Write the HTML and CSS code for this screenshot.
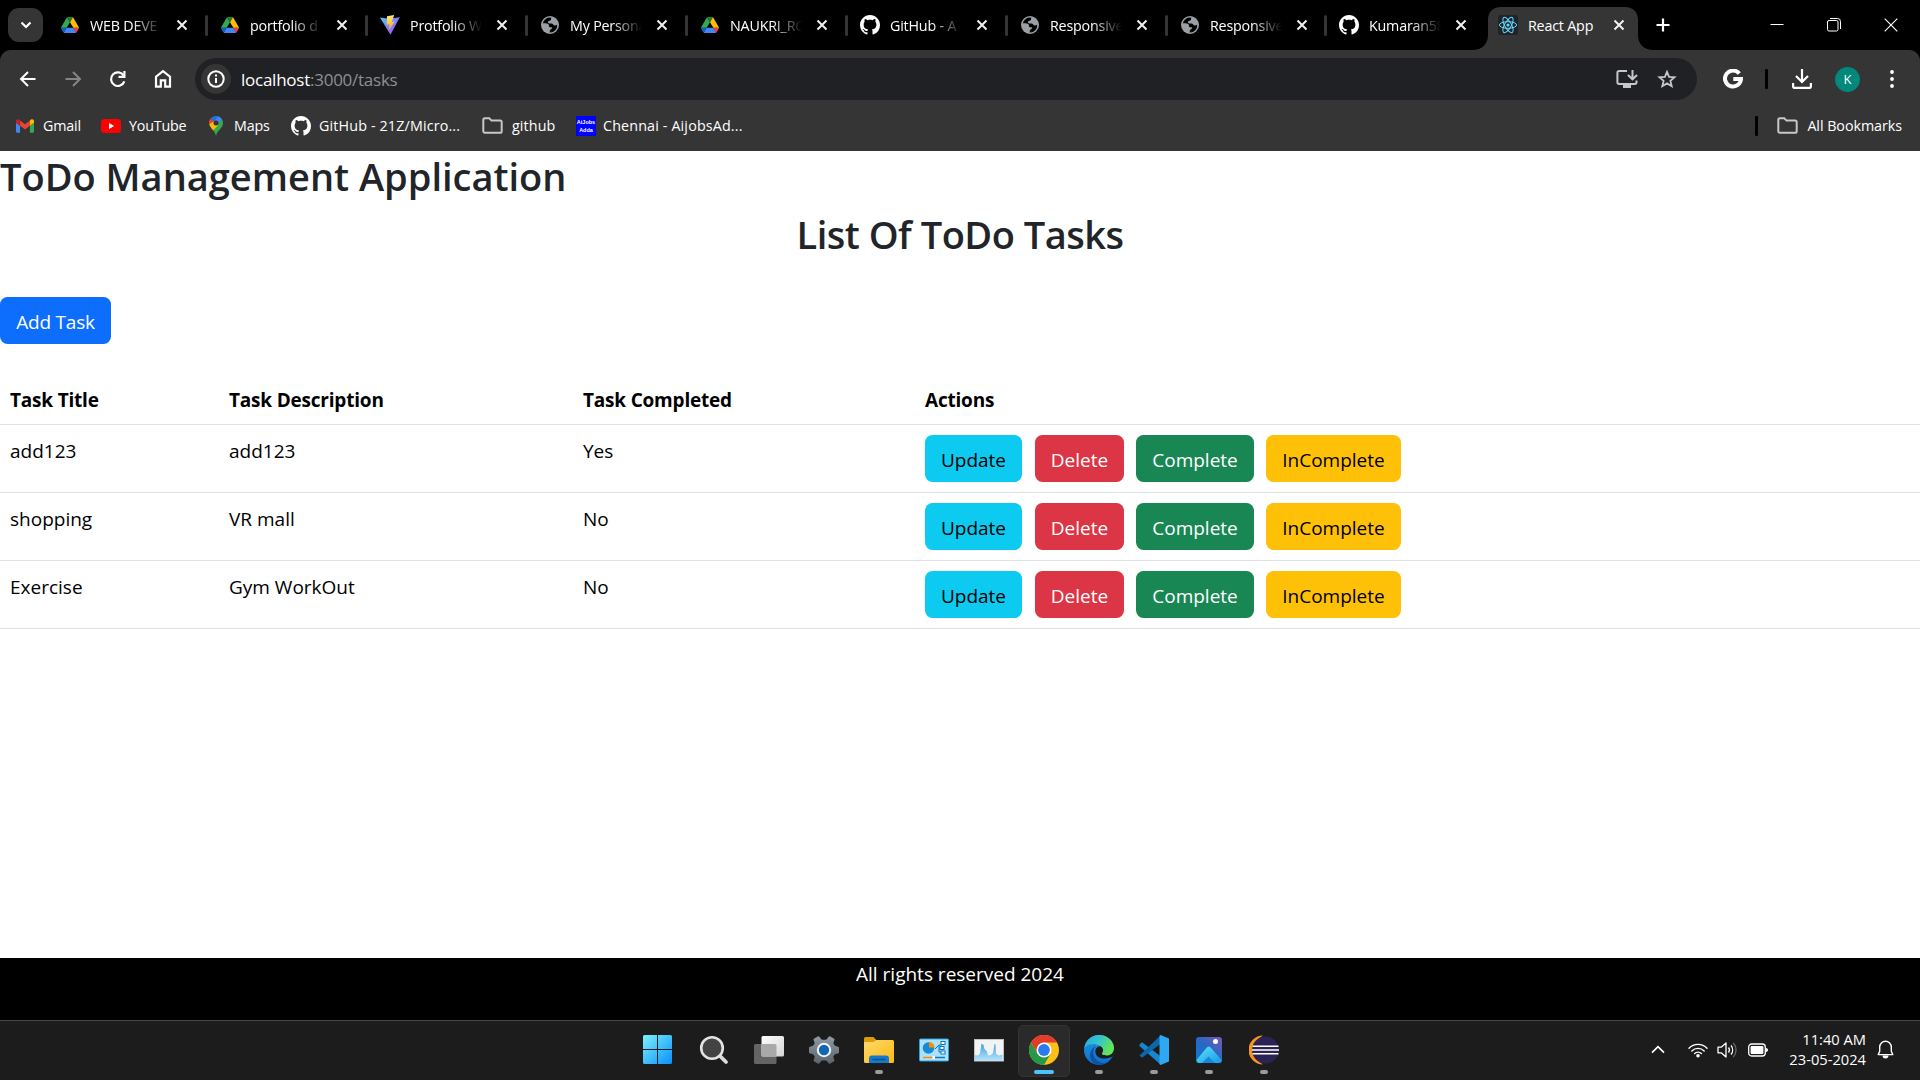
FILE: index.html
```html
<!DOCTYPE html>
<html lang="en">
<head>
<meta charset="utf-8">
<title>React App</title>
<link rel="stylesheet" href="styles.css">
</head>
<body>
<svg class="defs" aria-hidden="true">
  <defs>
    <linearGradient id="vite-a" x1="0" y1="0" x2="1" y2="1"><stop offset="0" stop-color="#41d1ff"/><stop offset="1" stop-color="#bd34fe"/></linearGradient>
    <linearGradient id="vite-b" x1="0" y1="0" x2="0" y2="1"><stop offset="0" stop-color="#ffea83"/><stop offset="1" stop-color="#ffa800"/></linearGradient>
    <linearGradient id="win" gradientUnits="userSpaceOnUse" x1="0" y1="0" x2="29" y2="29"><stop offset="0" stop-color="#7df0fb"/><stop offset="1" stop-color="#0a90fb"/></linearGradient>
    <linearGradient id="view" x1="0" y1="0" x2="1" y2="1"><stop offset="0" stop-color="#fff"/><stop offset="1" stop-color="#d4d4d4"/></linearGradient>
    <linearGradient id="gear" x1="0" y1="0" x2="0" y2="1"><stop offset="0" stop-color="#8f989f"/><stop offset="1" stop-color="#5c6670"/></linearGradient>
    <linearGradient id="folder" x1="0" y1="0" x2="1" y2="1"><stop offset="0" stop-color="#ffda6a"/><stop offset="1" stop-color="#fdb813"/></linearGradient>
    <linearGradient id="perf" x1="0" y1="0" x2="0" y2="1"><stop offset="0" stop-color="#3f9fe0"/><stop offset="1" stop-color="#b5e3fb"/></linearGradient>
    <linearGradient id="edge-a" x1="0" y1="0" x2="1" y2=".4"><stop offset="0" stop-color="#2ba5e0"/><stop offset=".5" stop-color="#34c3cf"/><stop offset="1" stop-color="#62e657"/></linearGradient>
    <linearGradient id="edge-b" x1="0" y1="0" x2="0" y2="1"><stop offset="0" stop-color="#2099dd"/><stop offset="1" stop-color="#0b6fd0"/></linearGradient>
    <linearGradient id="photo" x1="0" y1="1" x2="1" y2="0"><stop offset="0" stop-color="#0e78d4"/><stop offset=".5" stop-color="#2668c4"/><stop offset="1" stop-color="#7b57b8"/></linearGradient>
    <linearGradient id="hill" x1="0" y1="0" x2="1" y2="1"><stop offset="0" stop-color="#5fe3fb"/><stop offset="1" stop-color="#139ae6"/></linearGradient>
    <symbol id="drive" viewBox="0 0 87.3 78">
      <path fill="#0066da" d="m6.6 66.85 3.85 6.65c.8 1.4 1.95 2.5 3.3 3.3l13.75-23.8h-27.5c0 1.55.4 3.1 1.2 4.5z"/>
      <path fill="#34a853" d="m43.65 25-13.75-23.8c-1.35.8-2.5 1.9-3.3 3.3l-25.4 44a9.06 9.06 0 0 0-1.2 4.5h27.5z"/>
      <path fill="#ea4335" d="m73.55 76.8c1.35-.8 2.5-1.9 3.3-3.3l1.6-2.75 7.65-13.25c.8-1.4 1.2-2.95 1.2-4.5h-27.5l5.85 11.5z"/>
      <path fill="#188038" d="m43.65 25 13.75-23.8c-1.35-.8-2.9-1.2-4.5-1.2h-18.5c-1.6 0-3.15.45-4.5 1.2z"/>
      <path fill="#4285f4" d="m59.8 53h-32.3l-13.75 23.8c1.35.8 2.9 1.2 4.5 1.2h50.8c1.6 0 3.15-.45 4.5-1.2z"/>
      <path fill="#fbbc04" d="m73.4 26.5-12.7-22c-.8-1.4-1.95-2.5-3.3-3.3l-13.75 23.8 16.15 28h27.45c0-1.55-.4-3.1-1.2-4.5z"/>
    </symbol>
    <symbol id="github" viewBox="0 0 16 16"><path fill="#fff" d="M8 0C3.58 0 0 3.58 0 8c0 3.54 2.29 6.53 5.47 7.59.4.07.55-.17.55-.38 0-.19-.01-.82-.01-1.49-2.01.37-2.53-.49-2.69-.94-.09-.23-.48-.94-.82-1.13-.28-.15-.68-.52-.01-.53.63-.01 1.08.58 1.23.82.72 1.21 1.87.87 2.33.66.07-.52.28-.87.51-1.07-1.78-.2-3.64-.89-3.64-3.95 0-.87.31-1.59.82-2.15-.08-.2-.36-1.02.08-2.12 0 0 .67-.21 2.2.82.64-.18 1.32-.27 2-.27s1.36.09 2 .27c1.53-1.04 2.2-.82 2.2-.82.44 1.1.16 1.92.08 2.12.51.56.82 1.27.82 2.15 0 3.07-1.87 3.75-3.65 3.95.29.25.54.73.54 1.48 0 1.07-.01 1.93-.01 2.2 0 .21.15.46.55.38A8.01 8.01 0 0 0 16 8c0-4.42-3.58-8-8-8z"/></symbol>
    <symbol id="globe" viewBox="0 0 18 18">
      <circle cx="9" cy="9" r="9" fill="#9aa0a6"/>
      <path fill="#000" d="M10.3 1.7A7.4 7.4 0 0 0 1.8 7.3h2.8c2.2 0 3.4 1 3.4 2.6 0 1 .8 1.5 2.2 1.3 1.2-.2 1.4.6.6 1.4l-2 1.6v2.2A7.3 7.3 0 0 0 16.3 8.6c-1 .8-2.200 1.200-3.300.6-1-.5-1.100-1.600-2.300-1.700L8.200 7.400c-1.500 0-1.800-1.800-.6-2.400 1.100-.4 2.100-.3 2.400-1.400z"/>
    </symbol>
    <symbol id="close" viewBox="0 0 12 12"><path d="M1.500 1.500l9 9M10.500 1.500l-9 9" stroke="#f1f1f1" stroke-width="2"/></symbol>
    <symbol id="folder-line" viewBox="0 0 21 17"><path d="M1.300 14V3c0-1 .6-1.700 1.600-1.700h4.400l2.200 2.300h8.600c1 0 1.600.7 1.600 1.700v8.900c0 1-.6 1.600-1.600 1.600H2.900c-1 0-1.600-.7-1.600-1.800z" fill="none" stroke="#c7c7c7" stroke-width="2"/></symbol>
  </defs>
</svg>

<header class="browser">
  <div class="tabstrip">
    <button class="tab-search"><svg width="12" height="8" viewBox="0 0 12 8"><path d="M1.500 1.500L6 6l4.500-4.500" fill="none" stroke="#fff" stroke-width="2.200"/></svg></button>
    <div class="tabs">
      <div class="tab"><svg class="fav" viewBox="-1 -2 20 20"><use href="#drive" width="18" height="16"/></svg><span class="tab-title">WEB DEVE</span><svg class="x"><use href="#close"/></svg></div>
      <div class="tab"><svg class="fav" viewBox="-1 -2 20 20"><use href="#drive" width="18" height="16"/></svg><span class="tab-title">portfolio d</span><svg class="x"><use href="#close"/></svg></div>
      <div class="tab"><svg class="fav" viewBox="0 0 20 20"><path fill="url(#vite-a)" d="M0 2.500l8.500 1.300L19.800 2.200 10.500 19.800z"/><path fill="url(#vite-b)" d="M14.200 0L7 1.300 6.600 9.700l2.900-.5-.7 6 6-8.700-3 .5z"/></svg><span class="tab-title">Protfolio W</span><svg class="x"><use href="#close"/></svg></div>
      <div class="tab"><svg class="fav" viewBox="-1 -1 20 20"><use href="#globe" width="18" height="18"/></svg><span class="tab-title">My Persona</span><svg class="x"><use href="#close"/></svg></div>
      <div class="tab"><svg class="fav" viewBox="-1 -2 20 20"><use href="#drive" width="18" height="16"/></svg><span class="tab-title">NAUKRI_RO</span><svg class="x"><use href="#close"/></svg></div>
      <div class="tab"><svg class="fav"><use href="#github"/></svg><span class="tab-title">GitHub - A</span><svg class="x"><use href="#close"/></svg></div>
      <div class="tab"><svg class="fav" viewBox="-1 -1 20 20"><use href="#globe" width="18" height="18"/></svg><span class="tab-title">Responsive</span><svg class="x"><use href="#close"/></svg></div>
      <div class="tab narrow"><svg class="fav" viewBox="-1 -1 20 20"><use href="#globe" width="18" height="18"/></svg><span class="tab-title">Responsive</span><svg class="x"><use href="#close"/></svg></div>
      <div class="tab narrow last"><svg class="fav"><use href="#github"/></svg><span class="tab-title">Kumaran58</span><svg class="x"><use href="#close"/></svg></div>
      <div class="tab active"><svg class="tab-shape" width="182" height="43" viewBox="0 0 182 43"><path fill="#353535" d="M0 43c10 0 16-6 16-15V13C16 5 21 0 29 0h124c8 0 13 5 13 13v15c0 9 6 15 16 15z"/></svg><svg class="fav" viewBox="0 0 20 20"><rect width="20" height="20" rx="2" fill="#20232a"/><g fill="none" stroke="#61dafb" stroke-width="1"><ellipse cx="10" cy="10" rx="8.600" ry="3.300"/><ellipse cx="10" cy="10" rx="8.600" ry="3.300" transform="rotate(60 10 10)"/><ellipse cx="10" cy="10" rx="8.600" ry="3.300" transform="rotate(120 10 10)"/></g><circle cx="10" cy="10" r="1.600" fill="#61dafb"/></svg><span class="tab-title full">React App</span><svg class="x"><use href="#close"/></svg></div>
    </div>
    <svg class="new-tab" width="14" height="14" viewBox="0 0 14 14"><path d="M7 .5v13M.5 7h13" stroke="#fff" stroke-width="2.200"/></svg>
    <div class="window-controls">
      <svg width="14" height="14"><path d="M.5 6.500h13" stroke="#fff"/></svg>
      <svg width="14" height="14"><rect x=".5" y="2.500" width="10.500" height="10.500" rx="1.500" fill="none" stroke="#fff"/><path d="M3 .5h7.500a3 3 0 0 1 3 3V11" fill="none" stroke="#fff"/></svg>
      <svg width="14" height="14"><path d="M.7.7l12.600 12.600M13.300.7L.7 13.300" stroke="#fff" stroke-width="1.100"/></svg>
    </div>
  </div>

  <div class="toolbar">
    <div class="nav">
      <svg viewBox="0 0 20 20"><path d="M17.500 10H3.500M10 3l-7 7 7 7" fill="none" stroke="#fff" stroke-width="2"/></svg>
      <svg viewBox="0 0 20 20"><path d="M2.500 10h14M10 3l7 7-7 7" fill="none" stroke="#858585" stroke-width="2"/></svg>
      <svg viewBox="0 0 20 20"><path d="M16.300 12.300a6.800 6.800 0 1 1-.6-5.600" fill="none" stroke="#fff" stroke-width="2.200"/><path d="M17.500 2v7h-7V6.800h4.800V2z" fill="#fff"/></svg>
      <svg viewBox="0 0 20 20"><path d="M3 17.600V7.700l7-5.500 7 5.500v9.900h-4.800v-6.200H7.800v6.200z" fill="none" stroke="#fff" stroke-width="2.200"/></svg>
    </div>
    <div class="omnibox">
      <span class="site-info"><svg width="18" height="18" viewBox="0 0 18 18"><circle cx="9" cy="9" r="7.700" fill="none" stroke="#fff" stroke-width="2"/><path d="M9 8v5M9 4.600v2" stroke="#fff" stroke-width="2"/></svg></span>
      <span class="url">localhost<span class="dim">:3000/tasks</span></span>
      <svg class="install" width="22" height="20" viewBox="0 0 22 20"><path d="M11 2H3.200C2 2 1.400 2.600 1.400 3.700v9.600c0 1.100.6 1.700 1.800 1.700h15.600c1.100 0 1.700-.6 1.700-1.700v-1.800" fill="none" stroke="#c7c7c7" stroke-width="2"/><path d="M7 15.500h8v3.500H7z" fill="#c7c7c7"/><path d="M16.500 1v8.500M12 6l4.500 4.300L21 6" fill="none" stroke="#c7c7c7" stroke-width="2"/></svg>
      <svg width="20" height="20" viewBox="0 0 20 20"><path d="M10 2.800l2.100 5 5.500.5-4.200 3.600 1.300 5.300L10 14.400l-4.700 2.800 1.300-5.300-4.200-3.600 5.500-.5z" fill="none" stroke="#c7c7c7" stroke-width="1.800"/></svg>
    </div>
    <div class="actions">
      <svg class="g" width="20" height="20" viewBox="0 0 20 20"><path d="M16.300 4.600A8 8 0 1 0 18 10H10.300" fill="none" stroke="#fff" stroke-width="4"/></svg>
      <span class="divider"></span>
      <svg class="dl" width="20" height="20" viewBox="0 0 20 20"><path d="M10 0v12M4 7l6 6 6-6M1.100 14v3.200c0 1 .6 1.700 1.700 1.700h14.400c1.100 0 1.700-.7 1.700-1.700V14" fill="none" stroke="#fff" stroke-width="2.200"/></svg>
      <span class="avatar">K</span>
      <svg class="dots" width="4" height="18" viewBox="0 0 4 18"><g fill="#fff"><circle cx="2" cy="2" r="1.900"/><circle cx="2" cy="9" r="1.900"/><circle cx="2" cy="16" r="1.900"/></g></svg>
    </div>
  </div>

  <nav class="bookmarks">
    <a class="bm gmail"><svg width="18" height="14" viewBox="52 42 88 66"><path fill="#4285f4" d="M58 108h14V74L52 59v43c0 3.320 2.690 6 6 6"/><path fill="#34a853" d="M120 108h14c3.320 0 6-2.690 6-6V59l-20 15"/><path fill="#fbbc04" d="M120 48v26l20-15v-8c0-7.420-8.470-11.650-14.400-7.200"/><path fill="#ea4335" d="M72 74V48l24 18 24-18v26L96 92"/><path fill="#c5221f" d="M52 51v8l20 15V48l-5.600-4.200c-5.940-4.450-14.400-.22-14.400 7.200"/></svg><span>Gmail</span></a>
    <a class="bm youtube"><svg width="20" height="14" viewBox="0 0 20 14"><rect width="20" height="14" rx="3.500" fill="#f00"/><path d="M8 4l5.200 3L8 10z" fill="#fff"/></svg><span>YouTube</span></a>
    <a class="bm maps"><svg width="14" height="20" viewBox="0 0 14 20"><path fill="#34a853" d="M14 7c0 5.500-5.600 6.500-7 13-.6-2.500-1.600-4.100-2.700-5.500L12.600 2.800C13.500 4 14 5.400 14 7z"/><path fill="#fbbc04" d="M9.400 9L4.300 14.600C2.500 12.300.8 10.400.1 7.700L4.500 5z"/><path fill="#ea4335" d="M1.700 2.500L5 5.200.2 8.200C-.3 5.900.2 4.100 1.700 2.500z"/><path fill="#1a73e8" d="M1.700 2.500C4-.2 7.200-.4 9 .3L5 5.300z"/><path fill="#4285f4" d="M9 .3c1.700.5 3 1.500 3.800 2.900L8.900 8.400 4.800 5.300z"/><circle cx="7" cy="7" r="2.500" fill="#353535"/></svg><span>Maps</span></a>
    <a class="bm repo"><svg width="20" height="20"><use href="#github"/></svg><span>GitHub - 21Z/Micro...</span></a>
    <a class="bm gh-folder"><svg width="21" height="17"><use href="#folder-line"/></svg><span>github</span></a>
    <a class="bm jobs"><span class="jobs-icon">AiJobs<br>Adda</span><span>Chennai - AijobsAd...</span></a>
    <span class="divider push"></span>
    <a class="bm all"><svg width="21" height="17"><use href="#folder-line"/></svg><span>All Bookmarks</span></a>
  </nav>
</header>

<main class="page">
  <h2 class="heading app-title">ToDo Management Application</h2>
  <h2 class="heading list-title">List Of ToDo Tasks</h2>
  <button class="btn primary">Add Task</button>
  <table class="tasks">
    <colgroup><col class="c1"><col class="c2"><col class="c3"><col></colgroup>
    <thead><tr><th>Task Title</th><th>Task Description</th><th>Task Completed</th><th>Actions</th></tr></thead>
    <tbody>
      <tr><td>add123</td><td>add123</td><td>Yes</td><td><div class="row-actions"><button class="btn info">Update</button><button class="btn danger">Delete</button><button class="btn success">Complete</button><button class="btn warning">InComplete</button></div></td></tr>
      <tr><td>shopping</td><td>VR mall</td><td>No</td><td><div class="row-actions"><button class="btn info">Update</button><button class="btn danger">Delete</button><button class="btn success">Complete</button><button class="btn warning">InComplete</button></div></td></tr>
      <tr><td>Exercise</td><td>Gym WorkOut</td><td>No</td><td><div class="row-actions"><button class="btn info">Update</button><button class="btn danger">Delete</button><button class="btn success">Complete</button><button class="btn warning">InComplete</button></div></td></tr>
    </tbody>
  </table>
  <footer class="footer">All rights reserved 2024</footer>
</main>

<div class="taskbar">
  <div class="apps">
    <div class="app start"><svg width="29" height="29" viewBox="0 0 29 29"><path fill="url(#win)" d="M1.500 0H14v14H0V1.500A1.500 1.500 0 0 1 1.500 0zM15 0h12.500A1.500 1.500 0 0 1 29 1.500V14H15zM0 15h14v14H1.500A1.500 1.500 0 0 1 0 27.500zM15 15h14v12.500a1.500 1.500 0 0 1-1.500 1.500H15z"/></svg></div>
    <div class="app"><svg width="30" height="30" viewBox="0 0 30 30"><path d="M19 19l8 8" stroke="#d8dce0" stroke-width="3.800" stroke-linecap="round"/><circle cx="13" cy="13" r="10.800" fill="#434343" stroke="#e3e3e3" stroke-width="2.600"/></svg></div>
    <div class="app"><svg width="30" height="30" viewBox="0 0 30 30"><rect y="9" width="22.500" height="20" rx="1.500" fill="#646464"/><rect x="7.500" y="1" width="22.500" height="20.500" rx="1.500" fill="url(#view)"/><path d="M7.500 9H21a1.500 1.500 0 0 1 1.500 1.500v11H9A1.500 1.500 0 0 1 7.500 20z" fill="#a9a9a9"/></svg></div>
    <div class="app"><svg width="30" height="30" viewBox="0 0 30 30"><path fill="url(#gear)" stroke="url(#gear)" stroke-width="1.500" stroke-linejoin="round" transform="translate(15 15)" d="M-2.500-9.500L-5.500-13-9.800-10.500-8.500-6.700-10.400-3.700-14.300-2.300V2.500l4.100 1.200 1.700 3-1.200 4L-5.500 13l3-3.300h5L5.500 13l4.200-2.300-1.200-4 1.700-3 4.100-1.200v-4.800l-3.900-1.400-1.900-3 1.300-3.800L5.500-13l-3 3.500z"/><circle cx="15" cy="15" r="6.200" fill="#1266b5" stroke="#f4f4f4" stroke-width="2"/></svg></div>
    <div class="app open"><svg width="30" height="30" viewBox="0 0 30 30"><path fill="#dd9a0a" d="M0 3.500A1.500 1.500 0 0 1 1.500 2h8l3 3.200V10H0z"/><path fill="url(#folder)" d="M0 7h9.500l3-2h16A1.500 1.500 0 0 1 30 6.500v20a1.500 1.500 0 0 1-1.500 1.500h-27A1.500 1.500 0 0 1 0 26.500z"/><path fill="#1478cb" d="M5 28v-4.500a3 3 0 0 1 3-3h14a3 3 0 0 1 3 3V28z"/><path d="M9 24.500h12" stroke="#0b4f91" stroke-width="1.500" stroke-linecap="round"/></svg></div>
    <div class="app"><svg width="30" height="30" viewBox="0 0 30 30"><rect x=".5" y="4" width="29" height="22" rx="1" fill="#a9e2fb" stroke="#2d9fdf"/><circle cx="9.500" cy="13" r="5.800" fill="#1789d6"/><path d="M10 12.500V7a6 6 0 0 1 5.500 5.500z" fill="#ff8c00"/><path d="M16 14l4-4h3M20 10v7h3" fill="none" stroke="#1474c4"/><g fill="#fff" stroke="#1474c4"><rect x="22" y="6.500" width="4" height="3"/><rect x="21" y="11.500" width="4" height="3"/><rect x="22" y="16" width="4" height="3"/></g><path d="M4 22.500h10" stroke="#ff8c00" stroke-width="1.500"/><path d="M16 22.500h10" stroke="#1474c4" stroke-width="1.500"/><rect x="13.500" y="21" width="2.500" height="3" fill="#fff"/></svg></div>
    <div class="app"><svg width="30" height="30" viewBox="0 0 30 30"><rect x=".5" y="4.500" width="29" height="21.500" fill="#f1f3f5" stroke="#bcc1c5"/><path fill="url(#perf)" d="M1 25.500V20l3 .5 2-2L7.500 8.500l2 1.500 1 4 2.500 2.500 1 4 3-.5 2-2L20.500 9l1 .5.500 9 2.500 2 4-1v6z"/></svg></div>
    <div class="app current"><svg width="30" height="30" viewBox="0 0 30 30"><circle cx="15" cy="15" r="15" fill="#fbc116"/><path fill="#e33b2e" d="M2 7.500A15 15 0 0 1 28 7.500H15L8.500 18.800z"/><path fill="#249a48" d="M2 7.500A15 15 0 0 0 15 30l6.500-11.300H8.500z"/><circle cx="15" cy="15" r="7.500" fill="#fff"/><circle cx="15" cy="15" r="5.900" fill="#2a7bf0"/></svg></div>
    <div class="app open"><svg width="30" height="30" viewBox="0 0 30 30"><circle cx="15" cy="15" r="15" fill="url(#edge-b)"/><path fill="#1151a0" d="M12 11c-5 5-3 14 5 16.500 4.500 1.200 8-.5 10.500-4.500A15 15 0 0 1 15 30C8 30 4 22 7 16c1-2.500 3-4 5-5z"/><path fill="#1c1c1c" d="M18 11.500c-4-1.500-7.500 2-6.500 6.500C13 24 21 25 28.300 21.800 29 21 30 19.500 30 15h-8z"/><path fill="url(#edge-a)" d="M.3 13C1.500 5 8 0 15 0c9 0 15 6.500 15 13 0 5-3.500 7.500-7.500 7.500-3 0-5.200-1-4.400-2.400 2-2.500.8-5.600-1.600-7.100C11 7.700 3.500 8.500.3 13z"/></svg></div>
    <div class="app open"><svg width="30" height="30" viewBox="0 0 30 30"><path fill="#1687cf" d="M.5 9.500L3 7.200 22 21.500V30L.5 11z"/><path fill="#0b68ad" d="M.5 20.500L22 0v8.500L3 22.800z"/><path fill="#2fa8f3" d="M21.500 0L30 3.500v23L21.500 30c-.6-.3-1-.8-1-1.500v-27c0-.7.4-1.200 1-1.500z"/></svg></div>
    <div class="app open"><svg width="30" height="30" viewBox="0 0 30 30"><rect x="2" y="2" width="26" height="26" rx="3" fill="url(#photo)"/><path fill="url(#hill)" d="M2.500 25L13 12.300c1-1.200 2.500-1.200 3.500 0L28 25.500c-.5 1.500-1.500 2.500-3 2.500H5c-1 0-2-1-2.500-3z"/><path fill="#1787d9" d="M8 28l6.500-6.500L21 28z"/><circle cx="21.500" cy="6.500" r="2.500" fill="#fff"/></svg></div>
    <div class="app open"><svg width="30" height="30" viewBox="0 0 30 30"><path fill="#f7941e" d="M14 .5A14.500 14.500 0 0 0 14 29.500 16.500 16.500 0 0 1 14 .5z"/><circle cx="16.500" cy="15" r="13.500" fill="#2c2255"/><path d="M3.500 11.200h26M3 15h27M3.500 18.800h26" stroke="#fff" stroke-width="1.500"/></svg></div>
  </div>
  <div class="tray">
    <svg class="chev" width="14" height="9" viewBox="0 0 14 9"><path d="M1 7.700L7 1.700l6 6" fill="none" stroke="#fff" stroke-width="1.700"/></svg>
    <svg class="wifi" width="20" height="16" viewBox="0 0 20 16"><g fill="none" stroke="#fff" stroke-width="1.400" stroke-linecap="round"><path d="M1 6.200a12.500 12.500 0 0 1 18 0"/><path d="M3.800 9a8.600 8.600 0 0 1 12.400 0"/><path d="M6.600 11.600a5 5 0 0 1 6.800 0"/></g><circle cx="10" cy="13.700" r="1.800" fill="#fff"/></svg>
    <svg class="vol" width="20" height="18" viewBox="0 0 20 18"><path d="M1 6.200h3.200L9 2v14l-4.800-4.200H1z" fill="none" stroke="#fff" stroke-width="1.300" stroke-linejoin="round"/><path d="M11.500 6.500a4 4 0 0 1 0 5M14 4.500a7 7 0 0 1 0 9" fill="none" stroke="#fff" stroke-width="1.300"/><path d="M16.200 2a10 10 0 0 1 0 14" fill="none" stroke="#666" stroke-width="1.300"/></svg>
    <svg class="bat" width="20" height="14" viewBox="0 0 20 14"><rect x=".7" y="1" width="16.600" height="12" rx="3" fill="none" stroke="#fff" stroke-width="1.300"/><rect x="2.600" y="3" width="12.800" height="8" rx="1.200" fill="#fff"/><path d="M18 5c1.300.3 2 1 2 2s-.7 1.700-2 2z" fill="#fff"/></svg>
    <div class="clock"><span>11:40 AM</span><span>23-05-2024</span></div>
    <svg class="bell" width="17" height="19" viewBox="0 0 17 19"><path d="M1.200 14.600l1.500-3.300V7a5.800 5.800 0 0 1 11.600 0v4.300l1.500 3.300z" fill="none" stroke="#fff" stroke-width="1.400" stroke-linejoin="round"/><path d="M5.500 15.500a3 3 0 0 0 6 0z" fill="#fff"/></svg>
  </div>
</div>
</body>
</html>
```
FILE: styles.css
```css
* { box-sizing: border-box; }

body {
  margin: 0;
  width: 1920px;
  height: 1080px;
  overflow: hidden;
  display: flex;
  flex-direction: column;
  font-family: "Open Sans", "Noto Sans", sans-serif;
  font-size: 19px;
  color: #212529;
  background: #fff;
}

svg { display: block; flex: none; }
button { font: inherit; border: 0; padding: 0; }
.defs { position: absolute; width: 0; height: 0; }

/* Browser window */
.browser { height: 151px; flex: none; background: #000; color: #fff; font-size: 14.3px; }

.tabstrip { height: 50px; display: flex; align-items: center; padding-left: 8px; }
.tab-search {
  width: 35px; height: 34px; border-radius: 11px; background: #353535;
  display: flex; align-items: center; justify-content: center;
}
.tabs { display: flex; align-self: stretch; margin-left: 5px; }
.tab {
  position: relative; width: 160px; display: flex; align-items: center; padding-left: 12px;
}
.tab.narrow { width: 159px; }
.tab::after {
  content: ""; position: absolute; right: 0; top: 15px; width: 3px; height: 21px;
  border-radius: 2px; background: #353535;
}
.tab.last::after, .tab.active::after { display: none; }
.fav { width: 20px; height: 20px; }
.tab-title {
  width: 76px; margin-left: 10px; white-space: nowrap; letter-spacing: -.2px;
  mask-image: linear-gradient(90deg, #000 55%, transparent 95%);
}
.tab-title.full { mask-image: none; }
.x { width: 12px; height: 12px; margin-left: 10px; }
.tab.active .x { margin-left: 9px; }
.tab-shape { position: absolute; left: -14px; top: 7px; }
.tab.active > .fav, .tab.active > .tab-title, .tab.active > .x { position: relative; }
.new-tab { margin-left: 10px; }
.window-controls { margin-left: auto; display: flex; gap: 43px; padding-right: 22px; }

.toolbar {
  height: 58px; display: flex; align-items: center;
  background: #353535; border-radius: 11px 11px 0 0; padding-left: 18px;
}
.nav { display: flex; gap: 25px; }
.nav svg { width: 20px; height: 20px; }
.omnibox {
  margin-left: 22px; width: 1502px; height: 42px; border-radius: 21px; background: #202124;
  display: flex; align-items: center; padding: 0 20px 0 6px;
}
.site-info {
  width: 30px; height: 30px; border-radius: 50%; background: #353535;
  display: flex; align-items: center; justify-content: center;
}
.url { margin-left: 10px; font-size: 17px; letter-spacing: -.25px; }
.dim { color: #8e8f91; }
.install { margin-left: auto; margin-right: 19px; }
.actions { flex: 1; display: flex; align-items: center; }
.g { margin-left: 26px; }
.divider { width: 3px; height: 20px; border-radius: 1px; background: #000; }
.actions .divider { margin-left: 22px; }
.dl { margin-left: 24px; }
.avatar {
  width: 25px; height: 25px; margin-left: 23px; border-radius: 50%; background: #00897b;
  font-size: 13px; line-height: 25px; text-align: center;
}
.dots { margin-left: 30px; }

.bookmarks { height: 43px; background: #353535; display: flex; align-items: center; padding: 0 18px 8px 16px; }
.bm { display: flex; align-items: center; gap: 8px; white-space: nowrap; letter-spacing: -.2px; }
.gmail { width: 85px; gap: 9px; }
.youtube { width: 108px; }
.maps { width: 82px; gap: 11px; }
.repo { width: 191px; letter-spacing: .15px; }
.gh-folder { width: 94px; gap: 9px; letter-spacing: .1px; }
.jobs { gap: 7px; letter-spacing: .15px; }
.jobs-icon {
  width: 20px; height: 20px; background: #00f; text-align: center; letter-spacing: 0;
  font: bold 5.500px/8px "Liberation Sans", sans-serif; padding-top: 2px;
}
.push { margin-left: auto; }
.all { margin-left: 19px; gap: 9px; letter-spacing: -.05px; }

/* Application page */
.page { flex: 1; display: flex; flex-direction: column; align-items: flex-start; }
.heading { margin: 0 0 10px; font-size: 38px; line-height: 48px; font-weight: 600; width: 100%; padding-top: 1px; height: 48px; }
.list-title { text-align: center; margin-bottom: 40px; letter-spacing: -.5px; }
.btn {
  height: 47px; border-radius: 7.500px; font-size: 19px; line-height: 30px;
  display: flex; align-items: center; justify-content: center; color: #fff; padding-top: 2px;
}
.primary { width: 111px; background: #0d6efd; letter-spacing: -.2px; }
.info { width: 97px; margin-right: 1px; background: #0dcaf0; color: #000; }
.danger { width: 89px; background: #dc3545; }
.success { width: 118px; background: #198754; }
.warning { width: 135px; background: #ffc107; color: #000; }

.tasks { width: 1920px; margin-top: 30px; table-layout: fixed; border-collapse: separate; border-spacing: 0; color: #000; }
.c1 { width: 219px; }
.c2 { width: 354px; }
.c3 { width: 342px; }
th, td { padding: 11px 10px 9px; border-bottom: 1px solid #dee2e6; text-align: left; vertical-align: top; line-height: 30px; }
td:last-child { padding: 10px; }
th { font-weight: 700; letter-spacing: -.2px; }
.row-actions { display: flex; gap: 12px; }

.footer { margin-top: auto; width: 100%; height: 62px; background: #000; color: #fff; text-align: center; line-height: 32px; }

/* Desktop taskbar */
.taskbar {
  position: relative; height: 60px; flex: none; background: #1c1c1c; border-top: 1px solid #454545;
  display: flex; align-items: center; padding: 0 0 2px 631px; color: #fff;
}
.apps { display: flex; align-self: stretch; }
.app { position: relative; width: 55px; display: flex; align-items: center; justify-content: center; }
.app.start { padding-right: 2px; }
.app svg { position: relative; z-index: 1; }
.open::after {
  content: ""; position: absolute; bottom: 4px; left: 23.500px; width: 8px; height: 4px; border-radius: 2px; background: #9a9a9a;
}
.current::before {
  content: ""; position: absolute; left: 2px; top: 4px; width: 50px; height: 50px;
  border: 1px solid #333; border-radius: 5px; background: #2a2a2a;
}
.current::after {
  content: ""; position: absolute; bottom: 4px; left: 17.500px; width: 20px; height: 4px; border-radius: 2px; background: #4cc2ff;
}
.tray { margin-left: auto; display: flex; align-items: center; padding-right: 26px; }
.wifi { margin-left: 23px; }
.vol { margin-left: 9px; }
.bat { margin-left: 11px; }
.clock { width: 98px; display: flex; flex-direction: column; text-align: right; font-size: 14.700px; line-height: 20px; padding-bottom: 2px; }
.bell { margin-left: 11px; }
```
